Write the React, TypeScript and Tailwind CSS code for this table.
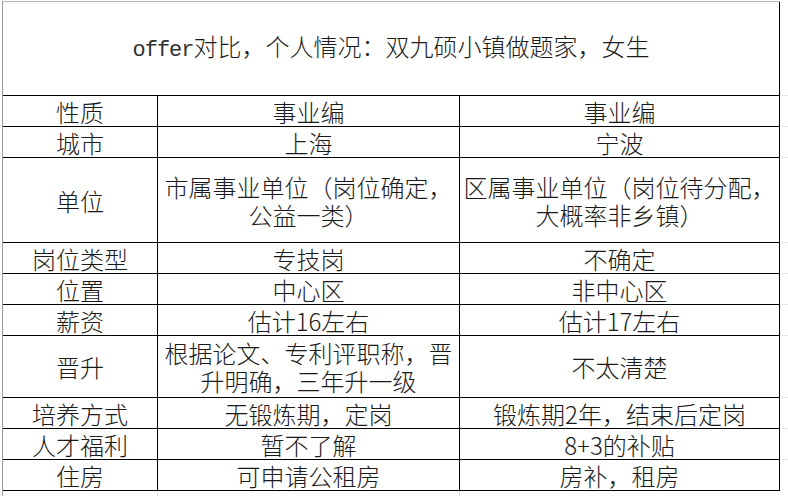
import React from 'react';

type Row = {
  label: string;
  a: string[];
  b: string[];
  h: string;
};

const rows: Row[] = [
  { label: '性质', a: ['事业编'], b: ['事业编'], h: 'h-[31px]' },
  { label: '城市', a: ['上海'], b: ['宁波'], h: 'h-[31px]' },
  {
    label: '单位',
    a: ['市属事业单位（岗位确定，', '公益一类）'],
    b: ['区属事业单位（岗位待分配，', '大概率非乡镇）'],
    h: 'h-[85px]',
  },
  { label: '岗位类型', a: ['专技岗'], b: ['不确定'], h: 'h-[31px]' },
  { label: '位置', a: ['中心区'], b: ['非中心区'], h: 'h-[31px]' },
  { label: '薪资', a: ['估计16左右'], b: ['估计17左右'], h: 'h-[31px]' },
  {
    label: '晋升',
    a: ['根据论文、专利评职称，晋', '升明确，三年升一级'],
    b: ['不太清楚'],
    h: 'h-[62px]',
  },
  { label: '培养方式', a: ['无锻炼期，定岗'], b: ['锻炼期2年，结束后定岗'], h: 'h-[31px]' },
  { label: '人才福利', a: ['暂不了解'], b: ['8+3的补贴'], h: 'h-[31px]' },
  { label: '住房', a: ['可申请公租房'], b: ['房补，租房'], h: 'h-[31px]' },
];

const Lines: React.FC<{ lines: string[] }> = ({ lines }) => (
  <p className="text-center leading-[28px] whitespace-nowrap">
    {lines.map((l, i) => (
      <React.Fragment key={l}>
        {i > 0 && <br />}
        {l}
      </React.Fragment>
    ))}
  </p>
);

export default function App() {
  return (
    <div
      className="w-[788px] h-[496px] bg-white text-[#1a1a1a] text-[24px] font-light overflow-hidden"
      style={{ fontFamily: '"Noto Sans CJK SC", sans-serif' }}
    >
      <div className="pt-[1px] pl-[2px] flex">
        <div className="w-[778px] border-l border-t border-l-[#9a9a9a] border-t-[#b4b4b4]">
          {/* title */}
          <div className="h-[94px] flex items-center justify-center border-b border-r border-black pb-[2px]">
            <span>
              <span
                className="text-[22px] tracking-[-1px] font-normal text-[#333]"
                style={{ fontFamily: '"Liberation Mono", monospace' }}
              >
                offer
              </span>
              对比，个人情况：双九硕小镇做题家，女生
            </span>
          </div>
          {rows.map((r) => (
            <div key={r.label} className={`flex ${r.h}`}>
              <div className="w-[155px] flex items-center justify-center border-b border-r border-black pt-[1px]">
                {r.label}
              </div>
              <div className="w-[302px] flex items-center justify-center border-b border-r border-black pt-[1px]">
                <Lines lines={r.a} />
              </div>
              <div className="w-[320px] flex items-center justify-center border-b border-r border-black pt-[1px]">
                <Lines lines={r.b} />
              </div>
            </div>
          ))}
          <div className="flex h-[8px]">
            <div className="w-[155px] border-r border-[#e2e2e2]" />
            <div className="w-[302px] border-r border-[#e2e2e2]" />
            <div className="w-[320px]" />
          </div>
        </div>
        {/* neighbouring sheet gridlines */}
        <div className="flex-1 pt-[94px]">
          {rows.map((r) => (
            <div key={r.label} className={`${r.h} border-t border-[#e6e6e6]`} />
          ))}
        </div>
      </div>
    </div>
  );
}
